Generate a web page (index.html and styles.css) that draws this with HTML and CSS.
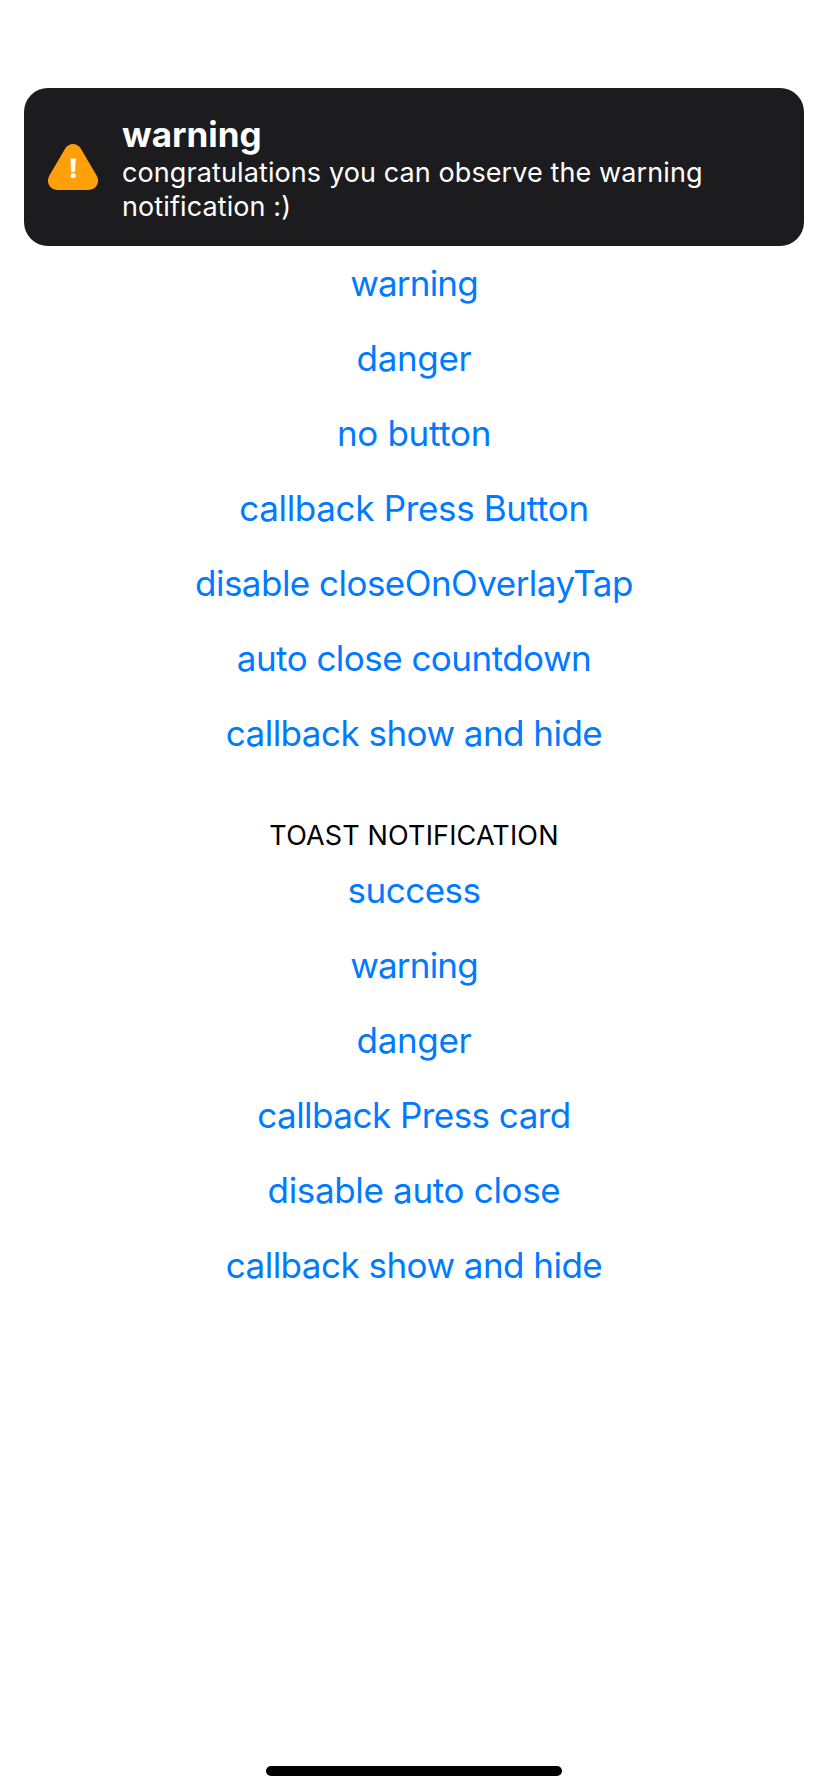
FILE: index.html
```
<!DOCTYPE html>
<html lang="en">
<head>
<meta charset="utf-8">
<title>Notifications</title>
<link rel="stylesheet" href="styles.css">
</head>
<body>
<div class="screen">
  <div class="toast">
    <svg class="toast-icon" width="50" height="46" viewBox="0 0 50 46">
      <path d="M17.2 4.6C21 -1.5 29 -1.5 32.800 4.600L48.600 31.500C52.500 38.500 48 46 40.500 46H9.500C2 46 -2.500 38.500 1.400 31.500Z" fill="#ff9f0a"/>
      <path d="M22.400 14.500H27.800L27 28H23.200Z" fill="#fff"/>
      <circle cx="25.100" cy="31.500" r="2.600" fill="#fff"/>
    </svg>
    <div class="toast-body">
      <div class="toast-title">warning</div>
      <div class="toast-text">congratulations you can observe the warning notification :)</div>
    </div>
  </div>
  <div class="list">
    <div class="button tight"><span>warning</span></div>
    <div class="button loose"><span>danger</span></div>
    <div class="button loose"><span>no button</span></div>
    <div class="button loose"><span>callback Press Button</span></div>
    <div class="button"><span>disable closeOnOverlayTap</span></div>
    <div class="button"><span>auto close countdown</span></div>
    <div class="button"><span>callback show and hide</span></div>
  </div>
  <div class="heading"><span>TOAST NOTIFICATION</span></div>
  <div class="list">
    <div class="button"><span>success</span></div>
    <div class="button tight"><span>warning</span></div>
    <div class="button loose"><span>danger</span></div>
    <div class="button"><span>callback Press card</span></div>
    <div class="button loose"><span>disable auto close</span></div>
    <div class="button"><span>callback show and hide</span></div>
  </div>
  <div class="home-indicator"></div>
</div>
</body>
</html>
```
FILE: styles.css
```
body {
  margin: 0;
  background: #fff;
  font-family: Inter, "Liberation Sans", sans-serif;
}
.screen {
  box-sizing: border-box;
  display: flex;
  flex-direction: column;
  height: 1792px;
  padding: 88px 0 16px;
}
.toast {
  box-sizing: border-box;
  display: flex;
  align-items: center;
  gap: 24px;
  height: 158px;
  margin: 0 24px;
  padding: 0 24px;
  border-radius: 24px;
  background: #1c1c1e;
  color: #fff;
}
.toast-icon {
  flex: none;
}
.toast-body {
  padding-top: 3px;
}
.toast-title {
  font-size: 35px;
  font-weight: 700;
  line-height: 43px;
  letter-spacing: 0;
}
.toast-text {
  font-size: 27px;
  line-height: 34px;
  letter-spacing: 0.1px;
}
.button {
  height: 75px;
  font-size: 35px;
  line-height: 75px;
  letter-spacing: -0.53px;
  text-align: center;
  color: #007aff;
}
.button.tight {
  letter-spacing: -0.8px;
}
.button.loose {
  letter-spacing: -0.33px;
}
.heading {
  margin: 48px 0 0;
  font-size: 27px;
  line-height: 34px;
  letter-spacing: 0.15px;
  text-align: center;
  color: #000;
}
.home-indicator {
  width: 296px;
  height: 10px;
  margin: auto auto 0;
  border-radius: 5px;
  background: #000;
}
```
